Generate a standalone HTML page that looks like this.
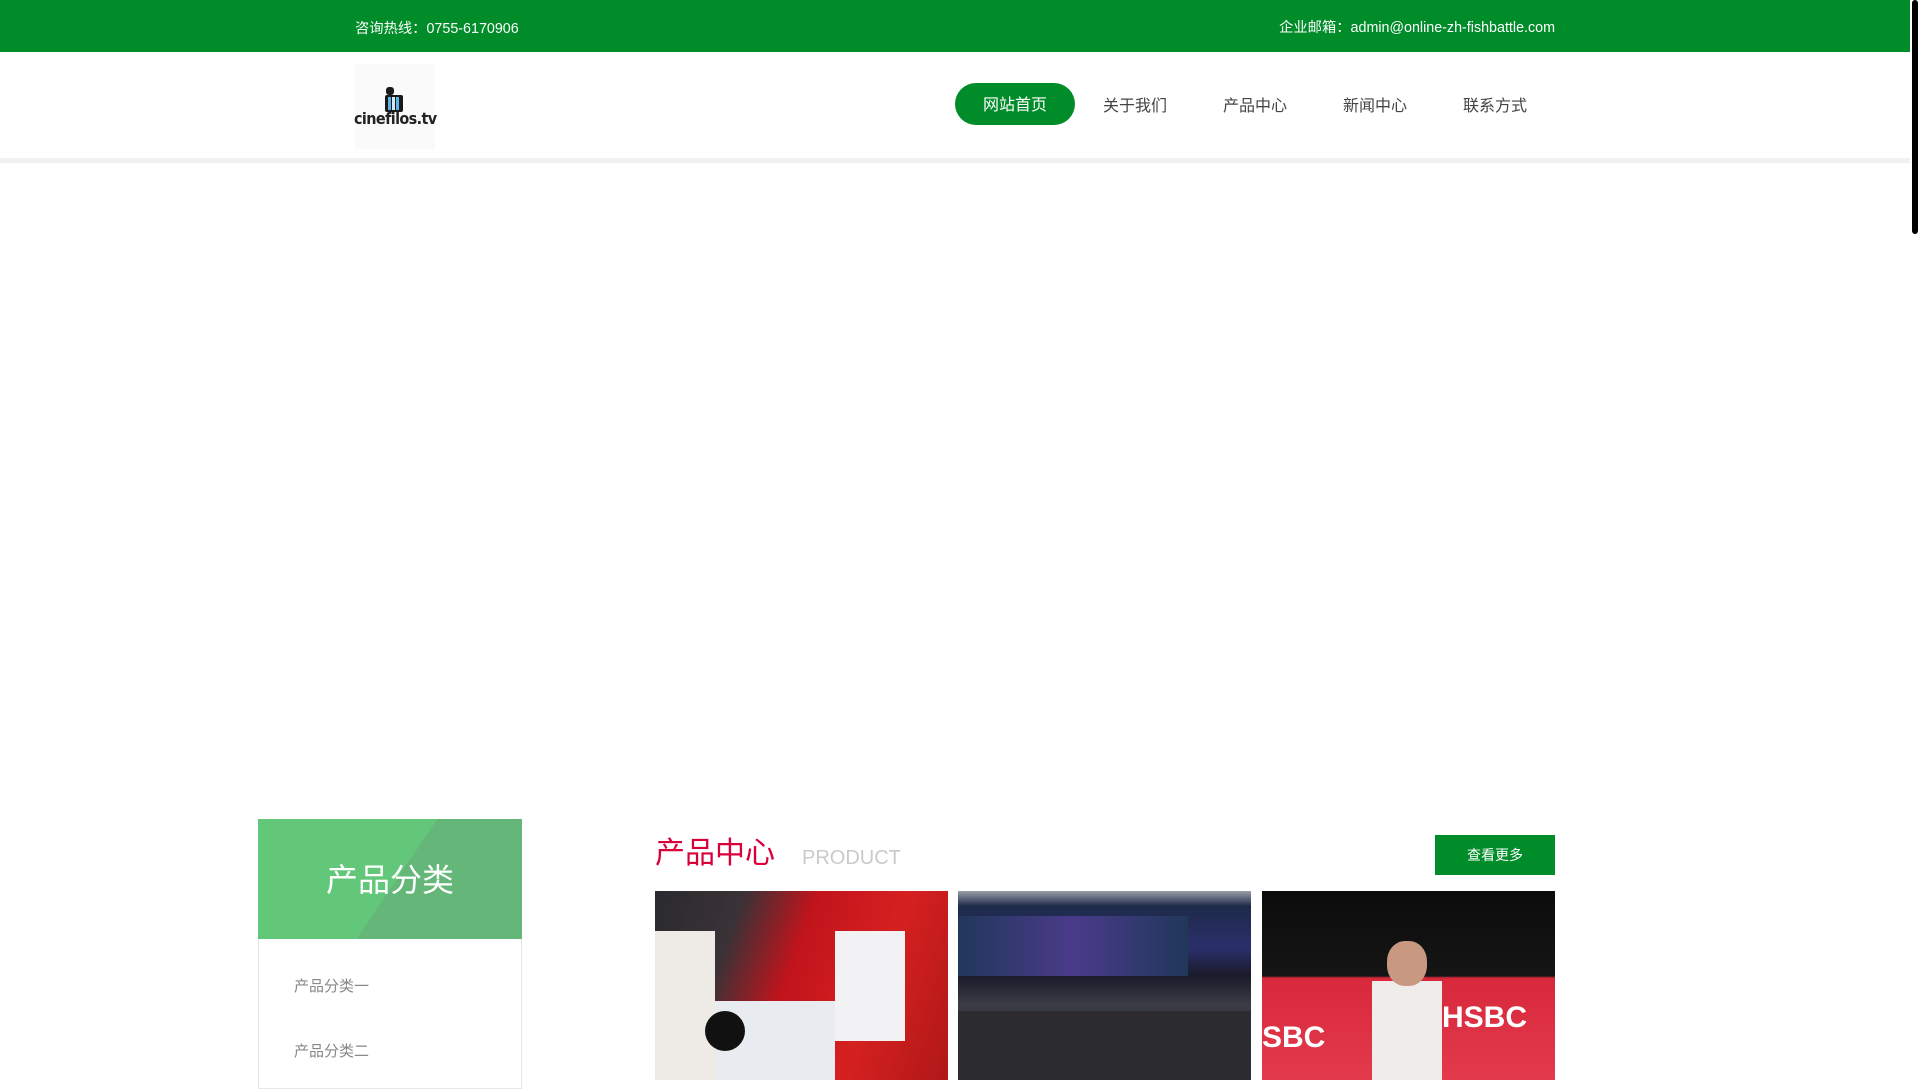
<!DOCTYPE html>
<html><head><meta charset="utf-8"><style>
*{margin:0;padding:0;box-sizing:border-box}
html,body{width:1920px;height:1080px;overflow:hidden;background:#fff;font-family:"Liberation Sans","Noto Sans CJK SC",sans-serif}
.abs{position:absolute}
.top{position:absolute;left:0;top:0;width:1910px;height:52px;background:#008c28;color:#fff;font-size:14px}
.nav a{position:absolute;top:84px;height:42px;line-height:42px;width:120px;text-align:center;font-size:16px;color:#444;text-decoration:none;padding-top:2px}
.nav a.on{background:#008c28;color:#fff;border-radius:21px}
.sb{position:absolute;right:0;top:0;width:10px;height:1080px;background:#fff}
.sb div{position:absolute;left:2px;top:0;width:6px;height:234px;background:#000;border-radius:3px}
.pic{position:absolute;top:891px;height:189px;width:293px}
</style></head><body>
<div class="top">
 <span class="abs" style="left:355px;top:17px;font-size:14.3px">咨询热线：0755-6170906</span>
 <span class="abs" style="right:355px;top:16px;font-size:14.3px">企业邮箱：admin@online-zh-fishbattle.com</span>
</div>
<div class="abs" style="left:355px;top:64px;width:80px;height:85px;background:#fafafa"></div>
<svg class="abs" style="left:384px;top:87px" width="20" height="26" viewBox="0 0 20 26"><rect x="2" y="0" width="8" height="8" rx="3" fill="#1a1a1a"/><rect x="1" y="8" width="18" height="17" rx="2" fill="#1a1a1a"/><rect x="4" y="10" width="3" height="13" fill="#5ab4e6"/><rect x="8" y="10" width="3" height="13" fill="#cfe9f7"/><rect x="12" y="10" width="3" height="13" fill="#5ab4e6"/></svg>
<div class="abs" style="left:354px;top:109px;width:82px;text-align:center;font-size:16px;font-weight:bold;color:#222;letter-spacing:-0.6px;font-family:'DejaVu Sans Condensed','DejaVu Sans',sans-serif">cinefilos.tv</div>
<div class="nav">
 <a class="on" style="left:955px;top:83px">网站首页</a>
 <a style="left:1075px">关于我们</a>
 <a style="left:1195px">产品中心</a>
 <a style="left:1315px">新闻中心</a>
 <a style="left:1435px">联系方式</a>
</div>
<div class="abs" style="left:0;top:158px;width:1910px;height:5px;background:#f1f1f1"></div>

<div class="abs" style="left:258px;top:819px;width:264px;height:120px;background:linear-gradient(124deg,#62c779 0,#62c779 52%,#64b778 52%)"></div>
<div class="abs" style="left:258px;top:860px;width:264px;text-align:center;font-size:32px;color:#fff;line-height:40px">产品分类</div>
<div class="abs" style="left:258px;top:939px;width:264px;height:150px;border:1px solid #e6e6e6;border-top:none"></div>
<div class="abs" style="left:294px;top:975px;font-size:15px;color:#888">产品分类一</div>
<div class="abs" style="left:294px;top:1040px;font-size:15px;color:#888">产品分类二</div>

<div class="abs" style="left:655px;top:835px;font-size:30px;color:#d9003a;line-height:38px">产品中心</div>
<div class="abs" style="left:802px;top:847px;font-size:20px;color:#c8ccc8">PRODUCT</div>
<div class="abs" style="left:1435px;top:835px;width:120px;height:40px;background:#008c28;color:#fff;font-size:14px;text-align:center;line-height:40px">查看更多</div>

<div class="pic" style="left:655px;background:linear-gradient(110deg,#2a2a2e 0,#3a3236 25%,#c0141c 45%,#d62020 70%,#b01818 100%)">
 <div class="abs" style="left:0;top:40px;width:60px;height:149px;background:#eeeae6"></div>
 <div class="abs" style="left:60px;top:110px;width:120px;height:79px;background:#e8ecf0"></div>
 <div class="abs" style="left:180px;top:40px;width:70px;height:110px;background:#f2f2f4"></div>
 <div class="abs" style="left:50px;top:120px;width:40px;height:40px;border-radius:50%;background:#111"></div>
</div>
<div class="pic" style="left:958px;background:linear-gradient(180deg,#9aa0a8 0,#1e2a4a 8%,#2a2f6a 30%,#1a1a2a 45%,#3a3c44 60%,#2a2a30 100%)">
 <div class="abs" style="left:0;top:25px;width:230px;height:60px;background:linear-gradient(90deg,#20385a,#4a3a8a,#20385a)"></div>
 <div class="abs" style="left:0;top:120px;width:293px;height:69px;background:#2c2c30"></div>
</div>
<div class="pic" style="left:1262px;background:linear-gradient(180deg,#0c0c0c 0,#151515 45%,#d8283c 46%,#e33a4c 100%)">
 <div class="abs" style="left:110px;top:90px;width:70px;height:99px;background:#f0ecea"></div>
 <div class="abs" style="left:125px;top:50px;width:40px;height:45px;border-radius:45%;background:#c89880"></div>
 <div class="abs" style="left:0;top:130px;font-size:30px;font-weight:bold;color:#fff">SBC</div>
 <div class="abs" style="left:180px;top:110px;font-size:30px;font-weight:bold;color:#fff">HSBC</div>
</div>
<div class="sb"><div></div></div>
</body></html>
